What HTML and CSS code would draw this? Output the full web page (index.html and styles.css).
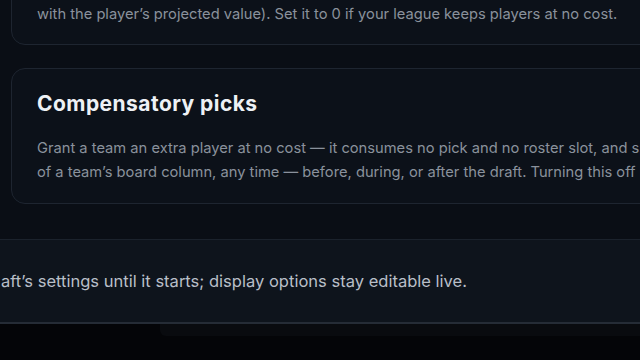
FILE: index.html
```html
<!DOCTYPE html>
<html lang="en">
<head>
<meta charset="utf-8">
<title>Draft settings</title>
<link rel="stylesheet" href="styles.css">
</head>
<body>
<div class="page">
  <section class="card card-cut">
    <p class="card-text">with the player’s projected value). Set it to 0 if your league keeps players at no cost.</p>
  </section>
  <section class="card">
    <h2 class="card-title">Compensatory picks</h2>
    <p class="card-text">Grant a team an extra player at no cost — it consumes no pick and no roster slot, and sponsors a bonus cell at the foot<br>of a team’s board column, any time — before, during, or after the draft. Turning this off hides the control.</p>
  </section>
</div>
<footer class="footer">
  <p class="footer-text">aft’s settings until it starts; display options stay editable live.</p>
</footer>
<div class="below">
  <div class="below-shelf"></div>
</div>
</body>
</html>
```

FILE: styles.css
```css
html, body {
  margin: 0;
  padding: 0;
}
body {
  width: 640px;
  height: 360px;
  overflow: hidden;
  background: #0a0e15;
  font-family: Inter, "Noto Sans", sans-serif;
}
.page {
  width: 1200px;
  padding-left: 11px;
  display: flex;
  flex-direction: column;
  gap: 23px;
  margin-top: -23px;
}
.card {
  border: 1px solid #1e2530;
  border-radius: 14px;
  background: #0c1119;
  padding: 21px 25px 19px;
}
.card-cut {
  padding-top: 24px;
  padding-bottom: 18px;
}
.card-title {
  margin: 0 0 18px;
  font-size: 21px;
  line-height: 28px;
  font-weight: 700;
  color: #eef1f5;
  letter-spacing: 0.45px;
}
.card-text {
  margin: 0;
  font-size: 14.7px;
  line-height: 24px;
  color: #8a919c;
  white-space: nowrap;
}
.footer {
  margin-top: 35px;
  height: 82px;
  border-top: 1px solid #1b222c;
  border-bottom: 2px solid #252c36;
  background: #0e141c;
  display: flex;
  align-items: center;
}
.footer-text {
  margin: 0;
  padding-left: 1px;
  font-size: 16.55px;
  line-height: 24px;
  color: #b9bfc8;
  white-space: nowrap;
}
.below {
  height: 40px;
  background: #040508;
}
.below-shelf {
  margin-left: 160px;
  height: 12px;
  background: #090b0f;
  border-bottom-left-radius: 6px;
}
```
